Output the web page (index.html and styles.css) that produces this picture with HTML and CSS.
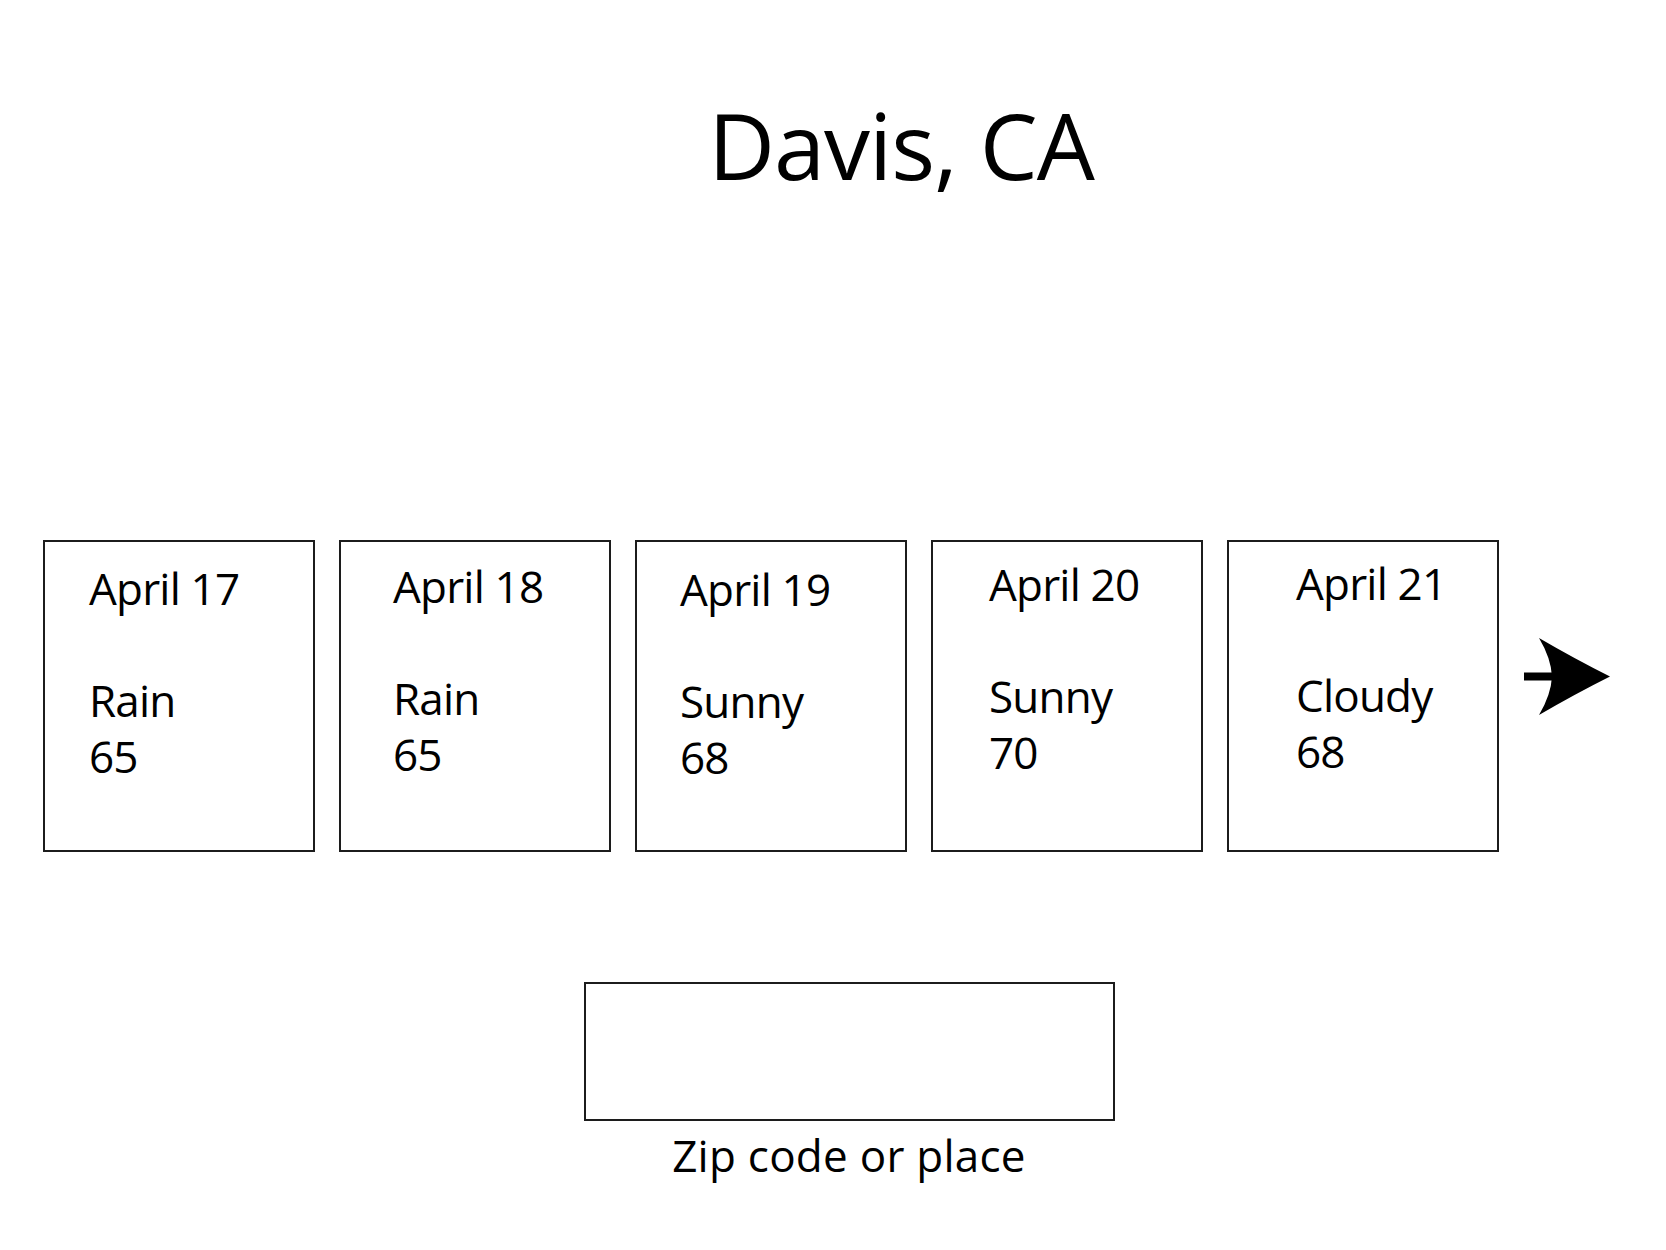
FILE: index.html
```html
<!DOCTYPE html>
<html lang="en">
<head>
    <meta charset="UTF-8">
    <meta name="viewport" content="width=device-width, initial-scale=1.0">
    <title>Weather - Davis, CA</title>
    <link rel="stylesheet" href="styles.css">
</head>
<body>
    <div class="page">
        <h1 class="city">Davis, CA</h1>

        <!-- Five day forecast -->
        <div class="forecast">
            <div class="day">
                <div class="date">April 17</div>
                <div>Rain</div>
                <div>65</div>
            </div>
            <div class="day">
                <div class="date">April 18</div>
                <div>Rain</div>
                <div>65</div>
            </div>
            <div class="day">
                <div class="date">April 19</div>
                <div>Sunny</div>
                <div>68</div>
            </div>
            <div class="day">
                <div class="date">April 20</div>
                <div>Sunny</div>
                <div>70</div>
            </div>
            <div class="day">
                <div class="date">April 21</div>
                <div>Cloudy</div>
                <div>68</div>
            </div>
            <button class="next" aria-label="Next days">
                <svg width="88" height="80" viewBox="0 0 88 80">
                    <rect x="1" y="35.5" width="30" height="8" fill="#000"/>
                    <path d="M16 1 Q52 22 87 39.5 Q52 57 16 78 Q28 58 29 39.5 Q28 21 16 1 Z" fill="#000"/>
                </svg>
            </button>
        </div>

        <div class="search">
            <input type="text" id="place" class="search-input">
            <label for="place" class="search-label">Zip code or place</label>
        </div>
    </div>
</body>
</html>
```

FILE: styles.css
```css
body {
    margin: 0;
    background: #fff;
    color: #000;
    font-family: "Open Sans", "Noto Sans", sans-serif;
}
.page {
    padding-top: 82px;
}
.city {
    margin: 0;
    padding-left: 136px;
    text-align: center;
    font-size: 92px;
    font-weight: 400;
    letter-spacing: -1px;
}
.forecast {
    display: flex;
    align-items: flex-start;
    gap: 24px;
    margin-top: 333px;
    padding-left: 43px;
}
.day {
    box-sizing: border-box;
    width: 272px;
    height: 312px;
    border: 2px solid #1c1c1c;
    padding: 16px 0 0 48px;
    font-size: 44px;
    line-height: 56px;
    letter-spacing: -0.8px;
}
.day:nth-child(1) { padding: 18px 0 0 44px; }
.day:nth-child(2) { padding: 16px 0 0 52px; }
.day:nth-child(3) { padding: 19px 0 0 43px; }
.day:nth-child(4) { padding: 14px 0 0 56px; }
.day:nth-child(5) { padding: 13px 0 0 67px; }
.date {
    margin-bottom: 56px;
}
.next {
    margin: 97px 0 0 0;
    padding: 0;
    border: none;
    background: none;
    cursor: pointer;
}
.next svg {
    display: block;
}
.search {
    display: flex;
    flex-direction: column;
    align-items: center;
    margin-top: 130px;
    padding-left: 32px;
}
.search-input {
    box-sizing: border-box;
    width: 531px;
    height: 139px;
    border: 2px solid #1c1c1c;
    padding: 0 20px;
    font-family: inherit;
    font-size: 44px;
    outline: none;
}
.search-label {
    margin-top: 6px;
    font-size: 44px;
    line-height: 56px;
    letter-spacing: 0.25px;
}
```
